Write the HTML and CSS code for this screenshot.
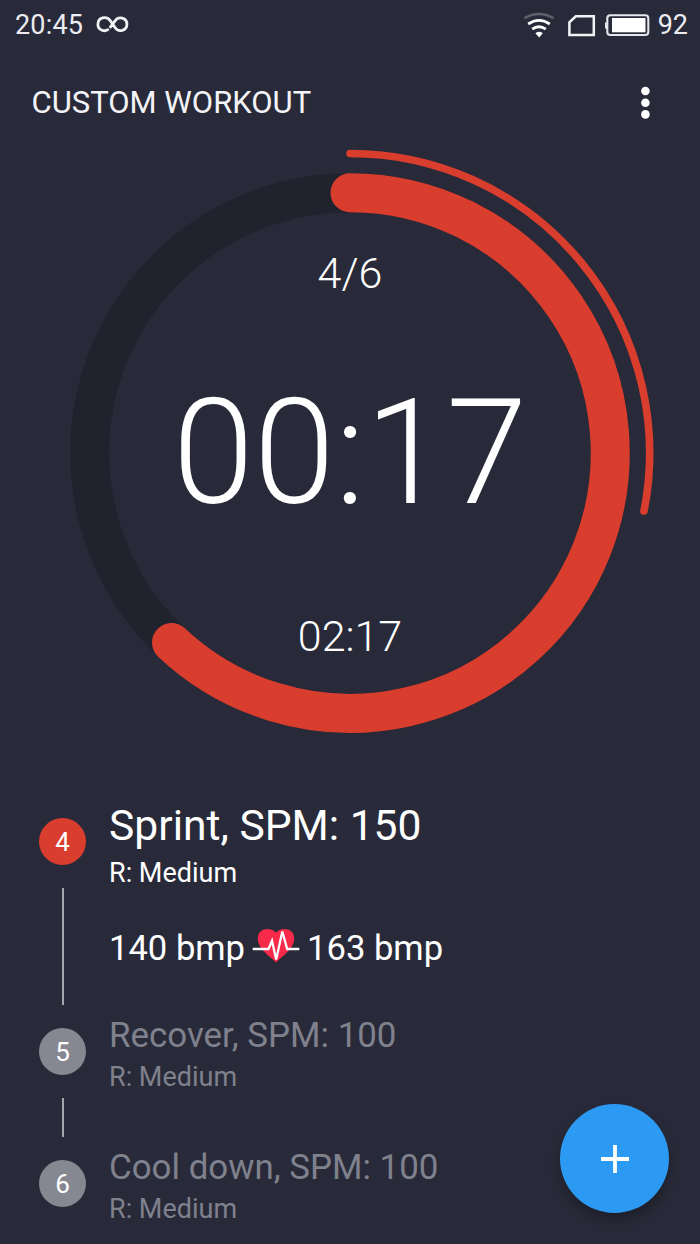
FILE: index.html
```html
<!DOCTYPE html>
<html lang="en">
<head>
<meta charset="utf-8">
<title>Custom workout</title>
<link rel="stylesheet" href="styles.css">
</head>
<body>
<main class="screen">
  <header class="status">
    <span class="clock">20:45</span>
    <svg class="infinity" width="34" height="20" viewBox="0 0 34 20"><path d="M13.8 14C9.9 17.4 2.9 15.4 2.9 9.3C2.9 2.2 11.4 .6 15 5.3L20.2 12.8C23.4 17.5 31.9 16.1 31.9 9.3C31.9 2.4 23.4 1 20.2 5.6L14.8 12.8" fill="none" stroke="#f2f2f6" stroke-width="2.8"/></svg>
    <span class="spacer"></span>
    <svg class="icons" width="128" height="30" viewBox="522 9 128 30">
      <g fill="none" stroke-width="2.5">
        <path d="M523.4 17.2Q538 8.6 552.6 17.2" stroke="#5f606c"/>
        <path d="M527.2 23Q538 15.8 548.8 23M531.2 28.2Q538 23.2 544.8 28.2" stroke="#fff" stroke-width="2.8"/>
      </g>
      <path d="M534.4 32.2Q538 29.4 541.8 32.2L538.2 36.6Z" fill="#fff"/>
      <path d="M574.8 15.3H592.8V33.9H568.4V21.4Z" fill="none" stroke="#f2f2f6" stroke-width="2.5"/>
      <rect x="606.3" y="14.2" width="41" height="19.8" rx="3" fill="none" stroke="#e6e6ec" stroke-width="2.1"/>
      <rect x="604" y="21.5" width="2" height="6" fill="#e6e6ec"/>
      <rect x="611" y="17" width="33.5" height="14.3" fill="#fff"/>
    </svg>
    <span class="battery">92</span>
  </header>

  <div class="appbar">
    <h1 class="title">CUSTOM WORKOUT</h1>
    <svg width="12" height="36" viewBox="0 0 12 36" fill="#fff"><circle cx="6.4" cy="7" r="4.3"/><circle cx="6.4" cy="18.8" r="4.3"/><circle cx="6.4" cy="30.4" r="4.3"/></svg>
  </div>

  <svg class="dial" width="700" height="620" viewBox="0 142 700 620">
    <circle cx="350" cy="453" r="260.3" fill="none" stroke="#20222e" stroke-width="39"/>
    <g fill="none" stroke="#d93d2d" stroke-linecap="round">
      <path d="M350 192.7A260.3 260.3 0 1 1 171.5 642.5" stroke-width="39"/>
      <path d="M350 153.5A299.5 299.5 0 0 1 644 511" stroke-width="7.6"/>
    </g>
    <g class="dial-text">
      <text x="350" y="288" class="small">4/6</text>
      <text x="350" y="503" class="big">00:17</text>
      <text x="350" y="651" class="small">02:17</text>
    </g>
  </svg>

  <section class="steps">
    <article class="step active">
      <div class="rail"><span class="badge">4</span><span class="line"></span></div>
      <div class="body">
        <h2 class="name">Sprint, SPM: 150</h2>
        <p class="note">R: Medium</p>
        <div class="pulse">
          <span>140 bmp</span>
          <svg width="48" height="38" viewBox="0 0 48 38"><path d="M24 35.5C18 29 5.8 22.5 5.8 11.3C5.8 1.2 18.8-.6 24 5.7C29.2-.6 42.2 1.2 42.2 11.3C42.2 22.5 30 29 24 35.5Z" fill="#f9294a"/><path d="M.7 22H16.5L20 13.8L24.2 32.5L30.3 4.5L35.2 22H47.3" fill="none" stroke="#fff" stroke-width="2.3"/></svg>
          <span>163 bmp</span>
        </div>
      </div>
    </article>
    <article class="step">
      <div class="rail"><span class="badge">5</span><span class="line"></span></div>
      <div class="body"><h2 class="name">Recover, SPM: 100</h2><p class="note">R: Medium</p></div>
    </article>
    <article class="step last">
      <div class="rail"><span class="badge">6</span></div>
      <div class="body"><h2 class="name">Cool down, SPM: 100</h2><p class="note">R: Medium</p></div>
    </article>
  </section>

  <button class="fab" aria-label="Add"><svg width="28" height="28" viewBox="0 0 28 28"><path d="M14 0V28M0 14H28" stroke="#fff" stroke-width="3.8"/></svg></button>
</main>
</body>
</html>
```
FILE: styles.css
```css
* { box-sizing: border-box; }
body { margin: 0; background: #292a39; font-family: Roboto, sans-serif; color: #fff; }
h1, h2, p { margin: 0; font-weight: 400; }
svg { display: block; flex: none; }
.screen { position: relative; width: 700px; height: 1244px; overflow: hidden; display: flex; flex-direction: column; }
.status { height: 49px; flex: none; display: flex; align-items: center; padding: 0 12px 0 15px; font-size: 27px; color: #ececf2; white-space: nowrap; }
.clock { letter-spacing: .2px; }
.infinity { margin-left: 12px; }
.spacer { flex: 1; }
.battery { margin-left: 7px; }
.appbar { height: 80px; flex: none; margin-top: 13px; padding: 0 49px 0 31.5px; display: flex; align-items: center; justify-content: space-between; }
.title { font-size: 31px; color: #f4f4f8; white-space: nowrap; }
.dial { width: 700px; height: 620px; }
.dial-text { fill: #fff; text-anchor: middle; font-weight: 300; }
.small { font-size: 43px; }
.big { font-size: 146px; }
.steps { padding-top: 33px; }
.step { display: flex; height: 132px; }
.active { height: 210px; }
.last { height: 107px; }
.rail { width: 109px; padding: 23px 0 0 39px; display: flex; flex-direction: column; gap: 23px; flex: none; }
.badge { width: 47px; height: 47px; flex: none; border-radius: 50%; background: #868891; font-size: 26px; line-height: 48px; text-align: center; }
.line { width: 2px; flex: 1; margin-left: 23px; background: #a5a6ad; }
.body { padding-top: 11px; white-space: nowrap; }
.name { font-size: 34.9px; line-height: 40px; color: #7f818d; }
.note { font-size: 27px; line-height: 32px; margin-top: 5px; color: #7f818d; }
.active .badge { background: #d93d2d; }
.active .body { padding-top: 4px; }
.active .name { font-size: 42.6px; line-height: 52px; color: #fff; }
.active .note { margin-top: 6px; color: #fff; }
.pulse { height: 48px; margin-top: 35px; display: flex; align-items: center; gap: 7px; font-size: 34.6px; color: #fff; }
.pulse svg { margin-top: -4px; }
.fab { position: absolute; right: 31px; bottom: 31px; width: 109px; height: 109px; padding: 0; border: 0; border-radius: 50%; background: #2c9af3; display: flex; align-items: center; justify-content: center; box-shadow: 0 7px 12px rgba(0, 0, 0, .27); }
```
